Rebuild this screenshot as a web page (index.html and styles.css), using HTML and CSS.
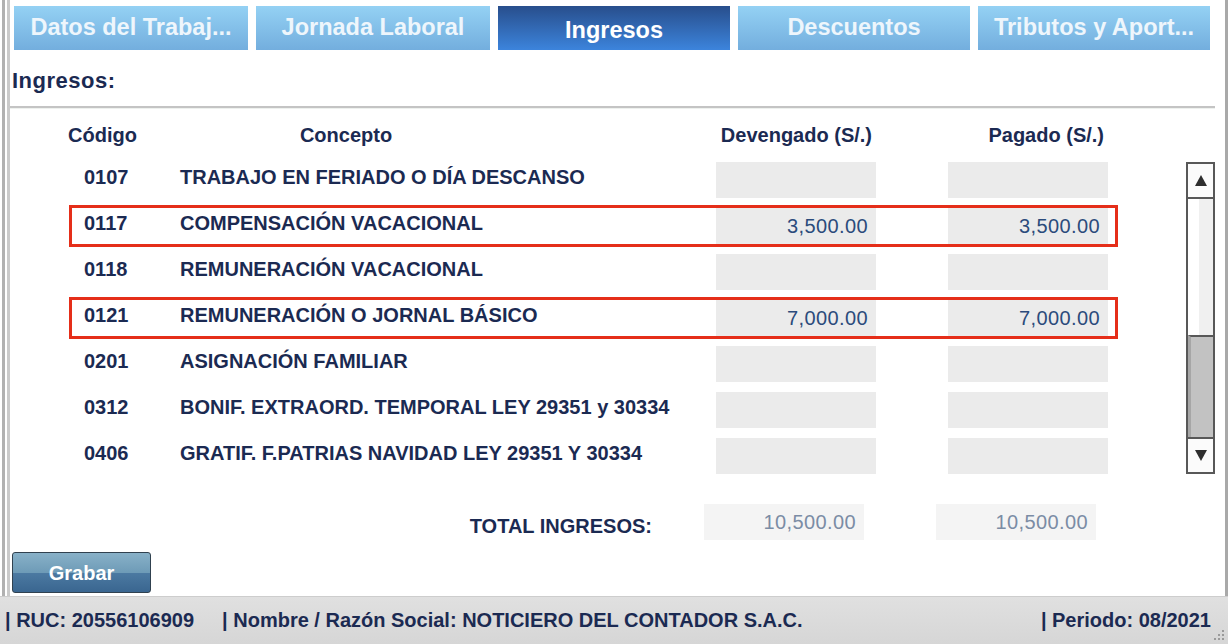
FILE: index.html
```html
<!DOCTYPE html>
<html lang="es">
<head>
<meta charset="utf-8">
<title>Ingresos</title>
<link rel="stylesheet" href="styles.css">
</head>
<body>
<div class="app">
  <div class="frame">
    <div class="inner">
      <nav class="tabs">
        <div class="tab wide">Datos del Trabaj...</div>
        <div class="tab wide">Jornada Laboral</div>
        <div class="tab active">Ingresos</div>
        <div class="tab">Descuentos</div>
        <div class="tab">Tributos y Aport...</div>
      </nav>
      <h2 class="title">Ingresos:</h2>
      <div class="rule"></div>
      <div class="thead">
        <span class="h-code">Código</span>
        <span class="h-concept">Concepto</span>
        <span class="h-amount">Devengado (S/.)</span>
        <span class="h-amount h-second">Pagado (S/.)</span>
      </div>
      <div class="grid-area">
        <div class="rows">
          <div class="row"><span class="code">0107</span><span class="concept">TRABAJO EN FERIADO O DÍA DESCANSO</span><span class="box"></span><span class="box second"></span></div>
          <div class="row hl"><span class="code">0117</span><span class="concept">COMPENSACIÓN VACACIONAL</span><span class="box">3,500.00</span><span class="box second">3,500.00</span></div>
          <div class="row"><span class="code">0118</span><span class="concept">REMUNERACIÓN VACACIONAL</span><span class="box"></span><span class="box second"></span></div>
          <div class="row hl"><span class="code">0121</span><span class="concept">REMUNERACIÓN O JORNAL BÁSICO</span><span class="box">7,000.00</span><span class="box second">7,000.00</span></div>
          <div class="row"><span class="code">0201</span><span class="concept">ASIGNACIÓN FAMILIAR</span><span class="box"></span><span class="box second"></span></div>
          <div class="row"><span class="code">0312</span><span class="concept">BONIF. EXTRAORD. TEMPORAL LEY 29351 y 30334</span><span class="box"></span><span class="box second"></span></div>
          <div class="row"><span class="code">0406</span><span class="concept">GRATIF. F.PATRIAS NAVIDAD LEY 29351 Y 30334</span><span class="box"></span><span class="box second"></span></div>
        </div>
        <div class="scrollbar">
          <div class="sb-btn sb-up"><svg width="12" height="11" viewBox="0 0 12 11"><polygon points="6,0 12,11 0,11" fill="#2e2e2e"/></svg></div>
          <div class="sb-track">
            <div class="sb-space"></div>
            <div class="sb-thumb"></div>
          </div>
          <div class="sb-btn sb-down"><svg width="12" height="11" viewBox="0 0 12 11"><polygon points="0,0 12,0 6,11" fill="#2e2e2e"/></svg></div>
        </div>
      </div>
      <div class="total">
        <span class="total-label">TOTAL INGRESOS:</span>
        <span class="tbox">10,500.00</span>
        <span class="tbox second">10,500.00</span>
      </div>
      <button class="grabar">Grabar</button>
    </div>
  </div>
  <footer class="status">
    <span>| RUC: 20556106909</span>
    <span class="name">| Nombre / Razón Social: NOTICIERO DEL CONTADOR S.A.C.</span>
    <span class="periodo">| Periodo: 08/2021</span>
    <svg class="grip" width="14" height="14" viewBox="0 0 14 14">
      <rect x="11" y="2" width="2" height="2" fill="#9a9a9a"/>
      <rect x="11" y="6" width="2" height="2" fill="#9a9a9a"/>
      <rect x="7" y="6" width="2" height="2" fill="#9a9a9a"/>
      <rect x="11" y="10" width="2" height="2" fill="#9a9a9a"/>
      <rect x="7" y="10" width="2" height="2" fill="#9a9a9a"/>
      <rect x="3" y="10" width="2" height="2" fill="#9a9a9a"/>
    </svg>
  </footer>
</div>
</body>
</html>
```
FILE: styles.css
```css
* { box-sizing: border-box; }

body {
  margin: 0;
  width: 1228px;
  height: 644px;
  overflow: hidden;
  background: #ffffff;
  font-family: "Liberation Sans", Arial, sans-serif;
  color: #1b2a52;
}

.app {
  display: flex;
  flex-direction: column;
  height: 644px;
}

.frame {
  height: 596px;
  margin-left: 2px;
  border-left: 3px solid #b1b1b1;
  border-right: 3px solid #a9a9a9;
  padding-left: 2px;
}

.inner {
  height: 100%;
  border-left: 3px solid #cacaca;
  display: flex;
  flex-direction: column;
}

/* Tabs */
.tabs {
  display: flex;
  gap: 8px;
  padding: 6px 0 0 4px;
}

.tab {
  width: 232px;
  height: 44px;
  display: flex;
  align-items: center;
  justify-content: center;
  font-weight: bold;
  font-size: 23.5px;
  color: #eef6fc;
  background: linear-gradient(#94d1f4, #73aede);
  padding-bottom: 1px;
}

.tab.wide {
  width: 234px;
}

.tab.active {
  background: linear-gradient(#284e8c, #3c84dc);
  color: #ffffff;
  padding-top: 5px;
  padding-bottom: 0;
}

/* Section title */
.title {
  margin: 0;
  height: 56px;
  padding: 6px 0 0 2px;
  display: flex;
  align-items: center;
  font-size: 22px;
  letter-spacing: 0.5px;
  font-weight: bold;
  color: #1b2a52;
}

.rule {
  height: 2px;
  background: #c4c4c4;
  margin-right: 10px;
  box-shadow: 0 1px 0 #eef1ee;
}

/* Table header */
.thead {
  height: 51px;
  display: flex;
  align-items: center;
  padding-top: 3px;
  font-weight: bold;
  font-size: 20px;
  color: #1b2a52;
}

.h-code {
  margin-left: 58px;
  width: 112px;
}

.h-concept {
  width: 332px;
  text-align: center;
}

.h-amount {
  margin-left: 204px;
  width: 160px;
  text-align: right;
  padding-right: 4px;
}

.h-amount.h-second {
  margin-left: 72px;
}

/* Rows */
.grid-area {
  display: flex;
  align-items: flex-start;
}

.rows {
  margin-left: 59px;
  width: 1049px;
  display: flex;
  flex-direction: column;
  gap: 4px;
}

.row {
  height: 42px;
  border: 3px solid transparent;
  display: flex;
  align-items: center;
  padding-right: 7px;
  font-size: 20px;
  font-weight: bold;
  color: #1b2a52;
}

.row.hl {
  border-color: #e52e19;
}

.code {
  width: 108px;
  padding-left: 12px;
  padding-bottom: 6px;
}

.concept {
  flex: 1;
  white-space: nowrap;
  padding-bottom: 6px;
}

.box {
  width: 160px;
  height: 36px;
  background: #ebebeb;
  display: flex;
  align-items: center;
  justify-content: flex-end;
  padding-right: 8px;
  font-weight: normal;
  font-size: 20px;
  letter-spacing: 0.4px;
  color: #2b4b7c;
}

.box.second {
  margin-left: 72px;
}

/* Scrollbar */
.scrollbar {
  margin-left: 68px;
  margin-top: 3px;
  width: 29px;
  height: 312px;
  border: 2px solid #585858;
  display: flex;
  flex-direction: column;
  background: #ffffff;
}

.sb-btn {
  height: 35px;
  display: flex;
  align-items: center;
  justify-content: center;
  background: #fbfbfb;
}

.sb-up { border-bottom: 2px solid #585858; }
.sb-down { border-top: 2px solid #585858; }

.sb-track {
  flex: 1;
  display: flex;
  flex-direction: column;
  background: linear-gradient(90deg, #ffffff 45%, #f0f0f0 45%);
}

.sb-space {
  height: 136px;
}

.sb-thumb {
  flex: 1;
  background: #c2c2c2;
  border-top: 2px solid #585858;
  border-left: 3px solid #a6a6a6;
}

/* Totals */
.total {
  display: flex;
  align-items: center;
  margin-top: 27px;
  height: 36px;
}

.total-label {
  width: 642px;
  text-align: right;
  padding-top: 9px;
  font-weight: bold;
  font-size: 20px;
  color: #1b2a52;
}

.tbox {
  margin-left: 52px;
  width: 160px;
  height: 36px;
  background: #f4f4f4;
  display: flex;
  align-items: center;
  justify-content: flex-end;
  padding-right: 8px;
  font-size: 20px;
  letter-spacing: 0.4px;
  color: #7b8ca5;
}

.tbox.second {
  margin-left: 72px;
}

/* Button */
.grabar {
  margin: 12px 0 0 2px;
  width: 139px;
  height: 41px;
  border: 1px solid #30414f;
  border-radius: 3px;
  background: linear-gradient(#88b1c8 0%, #6e9bb7 50%, #4b79a1 52%, #3a6690 100%);
  color: #ffffff;
  font-family: "Liberation Sans", Arial, sans-serif;
  font-weight: bold;
  font-size: 20px;
  padding: 1px 0 0;
}

/* Status bar */
.status {
  position: relative;
  flex: 1;
  display: flex;
  align-items: center;
  padding: 0 17px 1px 5px;
  background: linear-gradient(#e0e0e0, #d6d6d6);
  border-top: 1px solid #cdcdcd;
  font-weight: bold;
  font-size: 20px;
  color: #1b2a52;
  white-space: nowrap;
}

.status .name {
  margin-left: 28px;
}

.status .periodo {
  margin-left: auto;
}

.grip {
  position: absolute;
  right: 3px;
  bottom: 2px;
}
```
